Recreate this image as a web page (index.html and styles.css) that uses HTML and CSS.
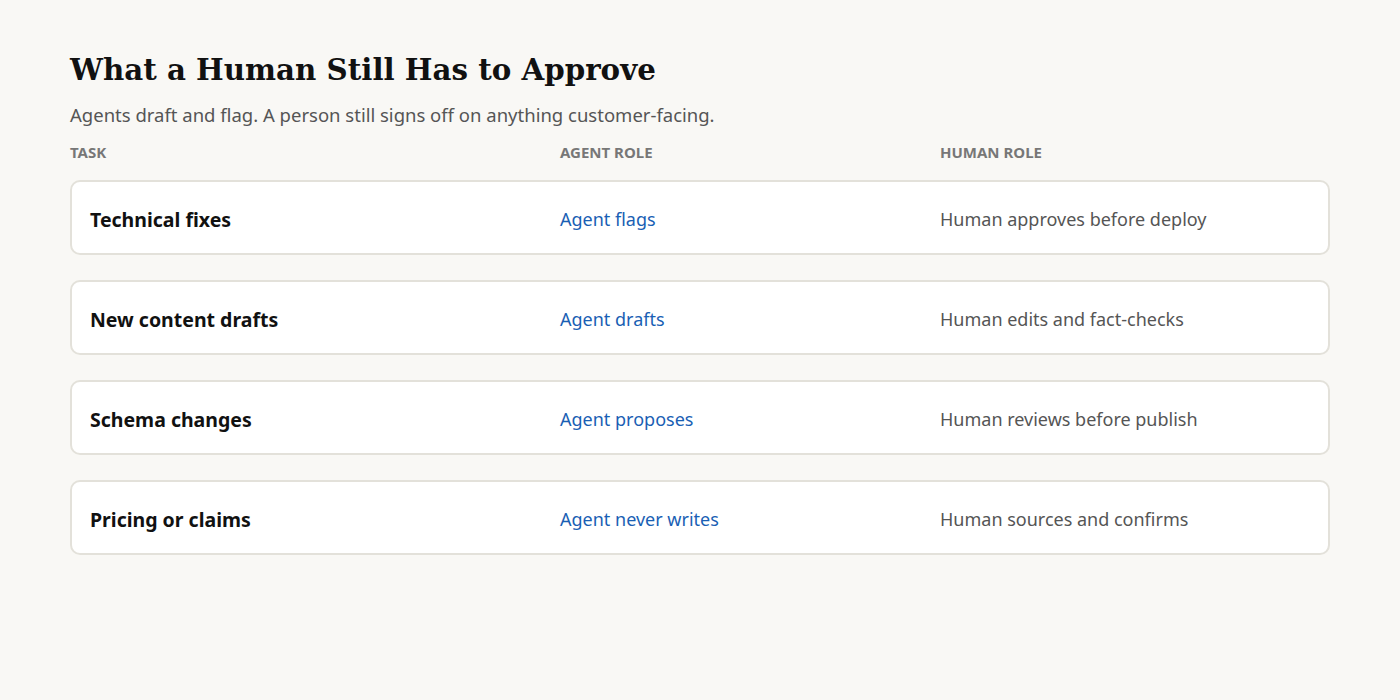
FILE: index.html
```html
<!DOCTYPE html>
<html lang="en">
<head>
  <meta charset="UTF-8" />
  <title>Human Approval</title>
  <link rel="stylesheet" href="styles.css">
</head>
<body>
  <div class="page">
    <h1>What a Human Still Has to Approve</h1>
    <p class="lede">Agents draft and flag. A person still signs off on anything customer-facing.</p>

    <div class="head-row">
      <span>Task</span>
      <span>Agent role</span>
      <span>Human role</span>
    </div>

    <div class="rows">
      <div class="row">
        <span class="task">Technical fixes</span>
        <span class="agent">Agent flags</span>
        <span class="human">Human approves before deploy</span>
      </div>
      <div class="row">
        <span class="task">New content drafts</span>
        <span class="agent">Agent drafts</span>
        <span class="human">Human edits and fact-checks</span>
      </div>
      <div class="row">
        <span class="task">Schema changes</span>
        <span class="agent">Agent proposes</span>
        <span class="human">Human reviews before publish</span>
      </div>
      <div class="row">
        <span class="task">Pricing or claims</span>
        <span class="agent">Agent never writes</span>
        <span class="human">Human sources and confirms</span>
      </div>
    </div>
  </div>
</body>
</html>
```

FILE: styles.css
```css
body {
  margin: 0;
  background-color: #f9f8f5;
  font-family: "Noto Sans", "Open Sans", sans-serif;
  color: #111;
}

.page {
  padding: 50px 70px;
}

h1 {
  font-family: "DejaVu Serif", serif;
  font-size: 29.3px;
  font-weight: bold;
  margin: 0;
  line-height: 40px;
  color: #111;
}

.lede {
  font-size: 18.5px;
  color: #555;
  margin: 12px 0 0;
  line-height: 26px;
}

.head-row {
  display: grid;
  grid-template-columns: 490px 380px 1fr;
  margin-top: 14px;
  font-size: 15px;
  font-weight: bold;
  text-transform: uppercase;
  color: #777;
  line-height: 20px;
}

.rows {
  display: flex;
  flex-direction: column;
  gap: 25px;
  margin-top: 18px;
}

.row {
  display: grid;
  grid-template-columns: 470px 380px 1fr;
  align-items: center;
  box-sizing: border-box;
  height: 75px;
  padding: 3px 18px 0;
  background: #fff;
  border: 2px solid #e3e1da;
  border-radius: 10px;
  font-size: 18px;
}

.task {
  font-size: 19.5px;
  font-weight: bold;
  color: #111;
}

.agent {
  color: #1a5fb4;
}

.human {
  color: #555;
}
```
